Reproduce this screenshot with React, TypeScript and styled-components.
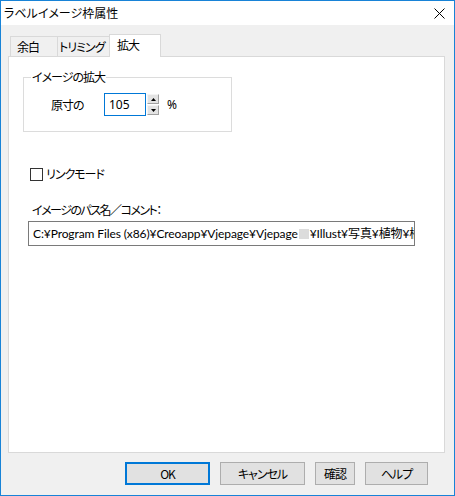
import React from "react";
import styled, { createGlobalStyle } from "styled-components";

const GlobalStyle = createGlobalStyle`
  html, body { margin: 0; padding: 0; background: #ffffff; }
  body {
    font-family: "Noto Sans CJK JP", "Noto Sans", sans-serif;
    font-size: 12px;
    color: #000;
    font-feature-settings: "palt";
    letter-spacing: -1px;
  }
  * { box-sizing: border-box; }
`;

const Window = styled.div`
  width: 455px;
  height: 496px;
  border: 1px solid #1883d7;
  background: #f0f0f0;
  display: flex;
  flex-direction: column;
`;

const TitleBar = styled.div`
  height: 24px;
  background: #ffffff;
  display: flex;
  align-items: center;
  justify-content: space-between;
  padding: 0 9px 0 3px;
  line-height: 16px;
  letter-spacing: 0;
`;

const Body = styled.div`
  flex: 1;
  display: flex;
  flex-direction: column;
  padding: 9px 8px 0 7px;
`;

const TabRow = styled.div`
  height: 22px;
  display: flex;
  align-items: flex-start;
  padding-left: 2px;
`;

const Tab = styled.div<{ $w: number; $pl: number; $active?: boolean }>`
  width: ${(p) => p.$w}px;
  height: ${(p) => (p.$active ? 23 : 20)}px;
  margin-top: ${(p) => (p.$active ? 0 : 2)}px;
  margin-left: -1px;
  &:first-child { margin-left: 0; }
  padding-left: ${(p) => p.$pl}px;
  border: 1px solid #d9d9d9;
  border-bottom: none;
  background: ${(p) => (p.$active ? "#ffffff" : "#f0f0f0")};
  position: relative;
  z-index: ${(p) => (p.$active ? 2 : 1)};
  display: flex;
  align-items: center;
  line-height: 16px;
  padding-bottom: ${(p) => (p.$active ? 2 : 0)}px;
  white-space: nowrap;
  overflow: hidden;
`;

const Panel = styled.div`
  width: 437px;
  height: 397px;
  background: #ffffff;
  border: 1px solid #d9d9d9;
  display: flex;
  flex-direction: column;
  align-items: flex-start;
`;

const GroupBox = styled.div`
  position: relative;
  width: 209px;
  height: 55px;
  margin: 20px 0 0 14px;
  border: 1px solid #dcdcdc;
  display: flex;
  align-items: flex-start;
  padding: 15px 0 0 27px;
`;

const GroupTitle = styled.span`
  position: absolute;
  top: -9px;
  left: 7px;
  padding: 0 1px;
  background: #ffffff;
  line-height: 16px;
`;

const FieldLabel = styled.span`
  width: 53px;
  height: 23px;
  line-height: 23px;
`;

const NumberInput = styled.div`
  width: 42px;
  height: 23px;
  border: 1px solid #0078d7;
  padding-left: 4px;
  line-height: 21px;
  letter-spacing: 0;
  font-family: "Noto Sans", "Noto Sans CJK JP", sans-serif;
`;

const Spinner = styled.div`
  width: 13px;
  height: 23px;
  display: flex;
  flex-direction: column;
  gap: 1px;
  padding: 1px 0 1px 1px;
`;

const SpinButton = styled.div`
  flex: 1;
  background: #e3e3e3;
  border-top: 1px solid #f4f4f4;
  border-left: 1px solid #f4f4f4;
  border-right: 1px solid #a0a0a0;
  border-bottom: 1px solid #a0a0a0;
  display: flex;
  align-items: center;
  justify-content: center;
`;

const Percent = styled.span`
  margin-left: 8px;
  height: 23px;
  line-height: 23px;
  letter-spacing: 0;
  font-family: "Noto Sans", "Noto Sans CJK JP", sans-serif;
`;

const CheckRow = styled.label`
  display: flex;
  align-items: center;
  gap: 3px;
  margin: 34px 0 0 21px;
  line-height: 16px;
`;

const CheckBox = styled.span`
  width: 13px;
  height: 13px;
  border: 1px solid #333333;
  background: #ffffff;
`;

const PathLabel = styled.div`
  margin: 20px 0 0 23px;
  line-height: 16px;
  letter-spacing: -1.5px;
`;

const PathInput = styled.div`
  width: 387px;
  height: 25px;
  margin: 3px 0 0 19px;
  border: 1px solid #7a7a7a;
  padding-left: 4px;
  line-height: 23px;
  white-space: nowrap;
  overflow: hidden;
  letter-spacing: -0.1px;
  font-family: "Lato", "Noto Sans CJK JP", sans-serif;
  font-size: 12px;
`;

const Masked = styled.span`
  display: inline-block;
  width: 10px;
  height: 10px;
  margin: 0 1px;
  background: #dcdcdc;
  vertical-align: -1px;
`;

const Footer = styled.div`
  display: flex;
  justify-content: flex-end;
  gap: 10px;
  padding: 9px 18px 10px 0;
`;

const Button = styled.div<{ $w: number; $default?: boolean }>`
  width: ${(p) => p.$w}px;
  height: 23px;
  background: #e1e1e1;
  border: ${(p) => (p.$default ? "2px solid #0078d7" : "1px solid #adadad")};
  display: flex;
  align-items: center;
  justify-content: center;
  line-height: 16px;
`;

const Arrow = ({ up }: { up?: boolean }) => (
  <svg width="5" height="3" viewBox="0 0 5 3">
    <polygon points={up ? "2.5,0 5,3 0,3" : "0,0 5,0 2.5,3"} fill="#000" />
  </svg>
);

export default function App() {
  return (
    <>
      <GlobalStyle />
      <Window>
        <TitleBar>
          <span>ラベルイメージ枠属性</span>
          <svg width="11" height="11" viewBox="0 0 11 11">
            <path d="M0.5 0.5 L10.5 10.5 M10.5 0.5 L0.5 10.5" stroke="#000" strokeWidth="1" />
          </svg>
        </TitleBar>
        <Body>
          <TabRow>
            <Tab $w={48} $pl={6}>余白</Tab>
            <Tab $w={53} $pl={1}>トリミング</Tab>
            <Tab $w={52} $pl={7} $active>拡大</Tab>
          </TabRow>
          <Panel>
            <GroupBox>
              <GroupTitle>イメージの拡大</GroupTitle>
              <FieldLabel>原寸の</FieldLabel>
              <NumberInput>105</NumberInput>
              <Spinner>
                <SpinButton><Arrow up /></SpinButton>
                <SpinButton><Arrow /></SpinButton>
              </Spinner>
              <Percent>%</Percent>
            </GroupBox>
            <CheckRow>
              <CheckBox />
              <span>リンクモード</span>
            </CheckRow>
            <PathLabel>イメージのパス名／コメント：</PathLabel>
            <PathInput>
              C:¥Program Files (x86)¥Creoapp¥Vjepage¥Vjepage<Masked />¥Illust¥写真¥植物¥植物
            </PathInput>
          </Panel>
          <Footer>
            <Button $w={85} $default>OK</Button>
            <Button $w={85}>キャンセル</Button>
            <Button $w={40}>確認</Button>
            <Button $w={63}>ヘルプ</Button>
          </Footer>
        </Body>
      </Window>
    </>
  );
}
